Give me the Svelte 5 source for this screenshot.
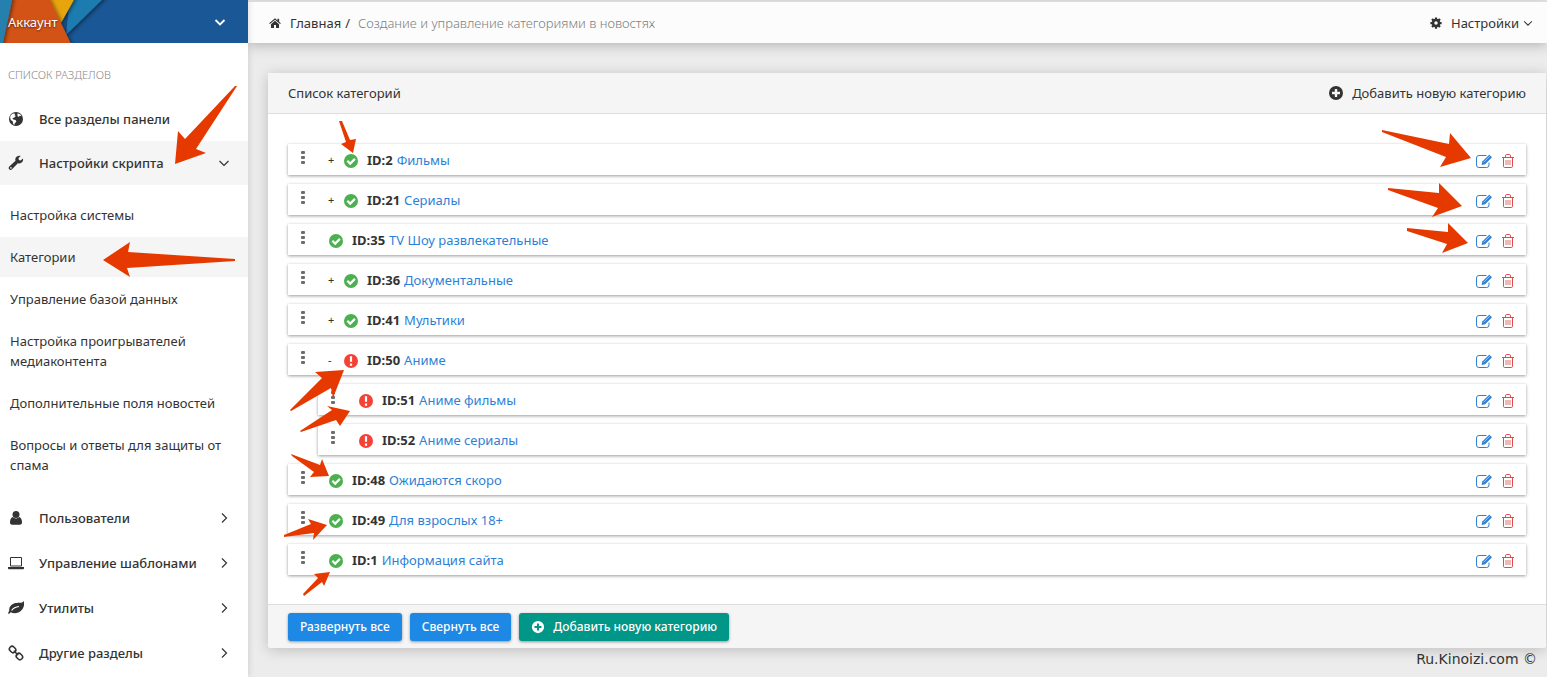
<script lang="ts">
	type Category = {
		id: number;
		name: string;
		active: boolean;
		open?: boolean;
		expandable?: boolean;
		children?: Category[];
	};

	const submenu = [
		'Настройка системы',
		'Категории',
		'Управление базой данных',
		'Настройка проигрывателей медиаконтента',
		'Дополнительные поля новостей',
		'Вопросы и ответы для защиты от спама'
	];

	const sections = [
		{ icon: 'user', title: 'Пользователи' },
		{ icon: 'laptop', title: 'Управление шаблонами' },
		{ icon: 'leaf', title: 'Утилиты' },
		{ icon: 'link', title: 'Другие разделы' }
	];

	let categories: Category[] = $state([
		{ id: 2, name: 'Фильмы', active: true, expandable: true },
		{ id: 21, name: 'Сериалы', active: true, expandable: true },
		{ id: 35, name: 'TV Шоу развлекательные', active: true },
		{ id: 36, name: 'Документальные', active: true, expandable: true },
		{ id: 41, name: 'Мультики', active: true, expandable: true },
		{
			id: 50,
			name: 'Аниме',
			active: false,
			expandable: true,
			open: true,
			children: [
				{ id: 51, name: 'Аниме фильмы', active: false },
				{ id: 52, name: 'Аниме сериалы', active: false }
			]
		},
		{ id: 48, name: 'Ожидаются скоро', active: true },
		{ id: 49, name: 'Для взрослых 18+', active: true },
		{ id: 1, name: 'Информация сайта', active: true }
	]);

	function setAll(open: boolean) {
		for (const category of categories) {
			if (category.expandable) category.open = open;
		}
	}

	const leftArrows = [
		'235,86 237,86 196,149 206,153 175,164 178,131 185,139',
		'103,260 130,242 128,252 235,259 235,261 127,268 130,277',
		'339,121 342,121 350,140 356,139 353,153 341,144 346,142',
		'290,410 322,378 315,372 344,370 333,398 331,388 291,411',
		'300,431 332,410 327,406 350,411 340,426 336,420 301,432',
		'291,454 320,465 322,459 329,476 310,477 314,472 292,456',
		'284,535 311,524 308,519 327,525 313,540 314,533 284,537',
		'303,594 318,578 314,574 330,572 324,586 322,582 304,596'
	];

	const rightArrows = [
		'5,130 72,144 73,133 94,158 63,167 69,157 5,132',
		'11,188 62,193 62,183 85,206 55,217 61,208 11,190',
		'30,228 71,232 71,223 91,243 65,253 70,244 30,231'
	];
</script>

{#snippet icon(name: string)}
	<svg class="icon" viewBox="0 0 16 16" aria-hidden="true">
		{#if name === 'globe'}
			<circle cx="8" cy="8" r="7" />
			<path class="cut" d="M2.6 4.2 5 2.4l2.2.3-.6 1.5 1.2.7-1.5 1.7-1.9.6.9 1.4 2.3.5.8 1.6-1.6 1.5-.5 1.8-1.2-1-.3-2.4-2-1.7-.7-2.2zM9.6 2.2l2.8 1.2 1 1.9-1.6-.5-1.5 1.3-.9-1.7z" />
		{:else if name === 'wrench'}
			<path d="M15 3.6 12.7 5.4 10.9 4.9 10.5 3.1 12.7 1.1C10.6.4 8.2 1.3 7.5 3.3 7.2 4.2 7.2 4.9 7.5 5.7L1.3 11.5c-.9 1-.8 2.1-.1 2.8.8.8 2 .8 2.8-.1l5.9-6c2.9 1 5.8-1.3 5.1-4.6zM2.9 13.7a.8.8 0 1 1 0-1.6.8.8 0 0 1 0 1.6z" />
		{:else if name === 'user'}
			<circle cx="8" cy="4.5" r="3.5" />
			<path d="M4.7 7.1C2.9 7.8 2 9.6 2 12.6 2 14 2.8 14.7 4 14.7h8c1.2 0 2-.7 2-2.1 0-3-.9-4.8-2.7-5.5C9.6 9 6.4 9 4.7 7.1z" />
		{:else if name === 'laptop'}
			<path class="line" d="M2.5 2.5h11V11h-11z" />
			<path d="M0 12h16v1.5c0 .4-.7.7-1.4.7H1.4c-.7 0-1.4-.3-1.4-.7z" />
		{:else if name === 'leaf'}
			<path d="M15.8 1C14 4 9.5 2.1 6 3.4 2.7 4.7.8 7.3 1.3 10.4L0 13.2l1.1.8 1.5-1.7c3.2 1.7 8 1.3 10.6-1.7 2.7-2.9 3.6-6.4 2.6-9.6z" />
			<path class="vein" d="M3.6 10.5C5.5 7.9 7.5 6.9 11 6.5" />
		{:else if name === 'link'}
			<rect class="bold" x="1.3" y="1.9" width="6.6" height="5.2" rx="2.4" transform="rotate(45 4.6 4.5)" />
			<rect class="bold" x="8.1" y="8.9" width="6.6" height="5.2" rx="2.4" transform="rotate(45 11.4 11.5)" />
			<path class="bold" d="m5.8 5.8 4.4 4.4" />
		{:else if name === 'home'}
			<path d="M8 1.7.2 8.3l1 1.1L8 3.7l6.8 5.7 1-1.1L13.5 6.3V2.3h-2.2v2.2z" />
			<path d="M8 5 2.6 9.5v5h4.1v-3.9h2.6v3.9h4.1v-5z" />
		{:else if name === 'cog'}
			<path class="teeth" d="M8 .5v15M.5 8h15M2.7 2.7l10.6 10.6M13.3 2.7 2.7 13.3" />
			<circle class="ring" cx="8" cy="8" r="4" />
		{:else if name === 'plus'}
			<path fill-rule="evenodd" d="M8 1a7 7 0 1 0 0 14A7 7 0 0 0 8 1zM6.8 4h2.4v2.8H12v2.4H9.2V12H6.8V9.2H4V6.8h2.8z" />
		{:else if name === 'ok'}
			<circle cx="8" cy="8" r="7" />
			<path class="mark" d="m4.3 7.7 2.9 2.9 4.7-4.7" />
		{:else if name === 'alert'}
			<circle cx="8" cy="8" r="7" />
			<path class="mark" d="M8 3.3v5.5M8 10.6v2.2" />
		{:else if name === 'edit'}
			<path class="thin" d="M10.5 2.5H3A2.5 2.5 0 0 0 .5 5v7A2.5 2.5 0 0 0 3 14.5h7.5A2.5 2.5 0 0 0 13 12V9.5" />
			<path d="m6.3 8.4 6.9-6.7L16 4.3l-6.9 6.9-3.5.7z" />
			<path class="nick" d="m7.6 9.3 6-6" />
		{:else if name === 'trash'}
			<path class="thin" d="M2 4.5h12M5.5 4V2.9c0-.8.4-1.4 1.2-1.4h2.6c.8 0 1.2.6 1.2 1.4V4M3.5 4.5v8.8c0 .8.4 1.2 1.2 1.2h6.6c.8 0 1.2-.4 1.2-1.2V4.5" />
			<path class="slats" d="M6 7v5M8 7v5M10 7v5" />
		{:else if name === 'down'}
			<path class="chevron" d="m3.5 6 4.5 4.5L12.5 6" />
		{:else if name === 'right'}
			<path class="chevron" d="m6 3.5 4.5 4.5L6 12.5" />
		{/if}
	</svg>
{/snippet}

{#snippet row(category: Category)}
	<li>
		<div class="row">
			<span class="grip" aria-hidden="true"><i></i><i></i><i></i></span>
			{#if category.expandable}
				<button
					class="toggle"
					aria-label="Подкатегории"
					onclick={() => (category.open = !category.open)}>{category.open ? '-' : '+'}</button
				>
			{/if}
			<span class={category.active ? 'status on' : 'status off'}>
				{@render icon(category.active ? 'ok' : 'alert')}
			</span>
			<p class="title"><b>ID:{category.id}</b><a href="#edit">{category.name}</a></p>
			<a class="edit" href="#edit" aria-label="Редактировать">{@render icon('edit')}</a>
			<a class="delete" href="#delete" aria-label="Удалить">{@render icon('trash')}</a>
		</div>
		{#if category.open && category.children}
			<ol class="list">
				{#each category.children as child (child.id)}
					{@render row(child)}
				{/each}
			</ol>
		{/if}
	</li>
{/snippet}

<div class="page">
	<aside class="sidebar">
		<button class="account">
			<svg class="material" viewBox="0 0 248 43" preserveAspectRatio="xMinYMin slice" aria-hidden="true">
				<defs>
					<filter id="shade" x="-20%" y="-20%" width="150%" height="150%">
						<feDropShadow dx="1" dy="1" stdDeviation="2" flood-opacity="0.6" />
					</filter>
				</defs>
				<path fill="#1a5796" d="M0 0h248v43H0z" />
				<path fill="#1f7bb0" filter="url(#shade)" d="M70-4h36L66 35z" />
				<path fill="#e8a40c" filter="url(#shade)" d="M44-4h32L61 23z" />
				<path fill="#d35217" filter="url(#shade)" d="M10-4h38l24 50H-4z" />
				<path fill="#2580ae" filter="url(#shade)" d="M-4-4h17L2 47h-6z" />
			</svg>
			<span>Аккаунт</span>
			{@render icon('down')}
		</button>

		<nav>
			<h2>СПИСОК РАЗДЕЛОВ</h2>
			<a class="section" href="#all">{@render icon('globe')}<span>Все разделы панели</span></a>
			<a class="section current" href="#settings">
				{@render icon('wrench')}<span>Настройки скрипта</span>{@render icon('down')}
			</a>
			<ul class="submenu">
				{#each submenu as item}
					<li><a class:selected={item === 'Категории'} href="#settings">{item}</a></li>
				{/each}
			</ul>
			{#each sections as section}
				<a class="section" href="#section">
					{@render icon(section.icon)}<span>{section.title}</span>{@render icon('right')}
				</a>
			{/each}
		</nav>
	</aside>

	<div class="content">
		<header class="topbar">
			<a href="#home">{@render icon('home')}<span>Главная</span></a>
			<span class="slash">/</span>
			<span class="crumb">Создание и управление категориями в новостях</span>
			<button class="settings">
				{@render icon('cog')}<span>Настройки</span>{@render icon('down')}
			</button>
		</header>

		<main class="panel">
			<div class="panel-head">
				<h1>Список категорий</h1>
				<a href="#add">{@render icon('plus')}<span>Добавить новую категорию</span></a>
			</div>
			<ol class="list root">
				{#each categories as category (category.id)}
					{@render row(category)}
				{/each}
			</ol>
			<div class="panel-foot">
				<button class="btn" onclick={() => setAll(true)}>Развернуть все</button>
				<button class="btn" onclick={() => setAll(false)}>Свернуть все</button>
				<button class="btn add">{@render icon('plus')}<span>Добавить новую категорию</span></button>
			</div>
		</main>

		<footer>Ru.Kinoizi.com ©</footer>
	</div>

	<svg class="arrows" width="360" height="600" viewBox="0 0 360 600" aria-hidden="true">
		{#each leftArrows as points}
			<polygon {points} />
		{/each}
	</svg>
	<svg class="arrows end" width="170" height="600" viewBox="0 0 170 600" aria-hidden="true">
		{#each rightArrows as points}
			<polygon {points} />
		{/each}
	</svg>
</div>

<style>
	:global(body) {
		margin: 0;
		background: #ececec;
		color: #333;
		font-family: 'Segoe UI', 'Noto Sans', sans-serif;
		font-size: 13px;
		line-height: 20px;
	}

	.page {
		position: relative;
		display: flex;
		min-height: 100vh;
		overflow: hidden;
	}

	a {
		color: inherit;
		text-decoration: none;
	}

	button {
		border: 0;
		padding: 0;
		background: none;
		color: inherit;
		font: inherit;
		cursor: pointer;
	}

	h1,
	h2,
	p {
		margin: 0;
		font-size: 13px;
		font-weight: 400;
	}

	ul,
	ol {
		margin: 0;
		padding: 0;
		list-style: none;
	}

	.icon {
		flex: none;
		width: 16px;
		height: 16px;
		fill: currentColor;
	}

	.line,
	.bold,
	.thin,
	.slats,
	.chevron,
	.ring,
	.teeth {
		fill: none;
		stroke: currentColor;
		stroke-width: 1;
	}

	.bold {
		stroke-width: 1.6;
	}

	.slats {
		stroke-width: 0.8;
	}

	.chevron {
		stroke-width: 1.2;
	}

	.ring {
		stroke-width: 3.4;
	}

	.teeth {
		stroke-width: 3;
		stroke-dasharray: 3 9 3 0;
	}

	.cut {
		fill: #fff;
	}

	.mark,
	.vein,
	.nick {
		fill: none;
		stroke: #fff;
		stroke-width: 2.2;
	}

	.vein {
		stroke-width: 1.2;
	}

	.nick {
		stroke-width: 0.6;
	}

	.sidebar {
		z-index: 1;
		flex: none;
		width: 248px;
		background: #fff;
		box-shadow: 1px 0 6px rgb(0 0 0 / 12%);
	}

	.account {
		position: relative;
		display: flex;
		align-items: center;
		justify-content: space-between;
		width: 100%;
		height: 43px;
		padding: 0 20px 0 8px;
		color: #fff;
		text-shadow: 0 1px 2px rgb(0 0 0 / 60%);
	}

	.account span,
	.account > .icon {
		z-index: 1;
	}

	.account .chevron {
		stroke-width: 1.8;
	}

	.material {
		position: absolute;
		inset: 0;
		width: 100%;
		height: 100%;
	}

	h2 {
		padding: 22px 8px 11px;
		color: #888;
		font-size: 11px;
		font-weight: 300;
	}

	.section {
		display: flex;
		align-items: center;
		gap: 15px;
		height: 45px;
		padding: 0 16px 0 8px;
		font-weight: 500;
	}

	.section span {
		flex: 1;
	}

	.current {
		height: 44px;
		background: #f5f5f5;
	}

	.submenu {
		display: grid;
		gap: 2px;
		padding: 10px 0;
	}

	.submenu a {
		display: block;
		padding: 10px 20px 10px 10px;
	}

	.submenu .selected {
		background: #f5f5f5;
	}

	.content {
		flex: 1;
		min-width: 0;
	}

	.topbar {
		display: flex;
		align-items: center;
		height: 41px;
		margin-top: 1px;
		border-top: 1px solid #ddd;
		padding: 0 12px 0 20px;
		background: #fcfcfc;
		box-shadow: 0 2px 12px rgb(0 0 0 / 25%);
	}

	.topbar a,
	.settings,
	.panel-head a,
	.add {
		display: flex;
		align-items: center;
		gap: 8px;
	}

	.topbar .icon {
		width: 14px;
		height: 12px;
	}

	.slash {
		margin: 0 8px 0 4px;
	}

	.crumb {
		color: #808080;
		font-weight: 300;
	}

	.settings {
		margin-left: auto;
	}

	.settings .icon:last-child {
		height: 14px;
		margin-left: -6px;
	}

	.panel {
		margin: 30px 1px 0 20px;
		border-radius: 3px;
		background: #fff;
		box-shadow: 0 2px 14px rgb(0 0 0 / 20%);
	}

	.panel-head {
		display: flex;
		align-items: center;
		justify-content: space-between;
		height: 40px;
		padding: 0 20px;
		border-bottom: 1px solid #ddd;
		background: #f5f5f5;
	}

	.list {
		display: grid;
		gap: 9px;
		padding: 9px 0 0 30px;
	}

	.root {
		padding: 30px 20px 29px;
	}

	.row {
		display: flex;
		align-items: center;
		height: 31px;
		padding-right: 10px;
		background: #fff;
		box-shadow: 0 1px 3px rgb(0 0 0 / 40%);
	}

	.grip {
		display: grid;
		gap: 2px;
		margin: 0 23px 4px 13px;
	}

	.grip i {
		width: 4px;
		height: 3px;
		border-radius: 1px;
		background: #6b6f6b;
	}

	.toggle {
		width: 15px;
		font-size: 11px;
		text-align: left;
	}

	.status {
		display: flex;
		margin-top: 3px;
	}

	.on {
		color: #4caf50;
	}

	.off {
		color: #f44336;
	}

	.title {
		flex: 1;
		padding-left: 8px;
	}

	.title b {
		margin-right: 4px;
		font-weight: 700;
	}

	.title a,
	.edit {
		color: #2e7fd6;
	}

	.edit,
	.delete {
		display: flex;
		margin: 2px 0 0 8px;
	}

	.delete {
		color: #dd4c46;
	}

	.panel-foot {
		display: flex;
		gap: 8px;
		padding: 8px 20px 7px;
		border-top: 1px solid #ddd;
		border-radius: 0 0 3px 3px;
		background: #f5f5f5;
	}

	.btn {
		height: 28px;
		padding: 0 12px;
		border-radius: 3px;
		background: #1e88e5;
		box-shadow: 0 1px 3px rgb(0 0 0 / 40%);
		color: #fff;
		font-size: 12px;
		font-weight: 500;
	}

	.add {
		background: #009688;
	}

	.add .icon {
		width: 14px;
		height: 14px;
	}

	footer {
		padding: 1px 10px 8px;
		font-family: 'DejaVu Sans', sans-serif;
		font-size: 14px;
		text-align: right;
	}

	.arrows {
		position: absolute;
		top: 0;
		left: 0;
		z-index: 2;
		fill: #e63900;
		pointer-events: none;
	}

	.end {
		right: 0;
		left: auto;
	}
</style>
